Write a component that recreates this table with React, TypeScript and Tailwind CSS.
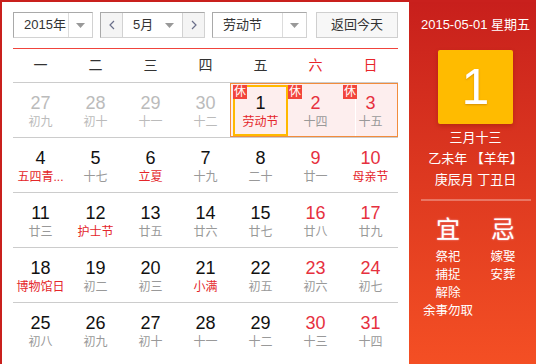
import React from 'react';

type Day = { n: number; sub: string; dim?: boolean; weekend?: boolean; fest?: boolean };

const rows: Day[][] = [
  [
    { n: 27, sub: '初九', dim: true },
    { n: 28, sub: '初十', dim: true },
    { n: 29, sub: '十一', dim: true },
    { n: 30, sub: '十二', dim: true },
    { n: 1, sub: '劳动节', fest: true },
    { n: 2, sub: '十四', weekend: true },
    { n: 3, sub: '十五', weekend: true },
  ],
  [
    { n: 4, sub: '五四青...', fest: true },
    { n: 5, sub: '十七' },
    { n: 6, sub: '立夏', fest: true },
    { n: 7, sub: '十九' },
    { n: 8, sub: '二十' },
    { n: 9, sub: '廿一', weekend: true },
    { n: 10, sub: '母亲节', weekend: true, fest: true },
  ],
  [
    { n: 11, sub: '廿三' },
    { n: 12, sub: '护士节', fest: true },
    { n: 13, sub: '廿五' },
    { n: 14, sub: '廿六' },
    { n: 15, sub: '廿七' },
    { n: 16, sub: '廿八', weekend: true },
    { n: 17, sub: '廿九', weekend: true },
  ],
  [
    { n: 18, sub: '博物馆日', fest: true },
    { n: 19, sub: '初二' },
    { n: 20, sub: '初三' },
    { n: 21, sub: '小满', fest: true },
    { n: 22, sub: '初五' },
    { n: 23, sub: '初六', weekend: true },
    { n: 24, sub: '初七', weekend: true },
  ],
  [
    { n: 25, sub: '初八' },
    { n: 26, sub: '初九' },
    { n: 27, sub: '初十' },
    { n: 28, sub: '十一' },
    { n: 29, sub: '十二' },
    { n: 30, sub: '十三', weekend: true },
    { n: 31, sub: '十四', weekend: true },
  ],
];

const weekdays = ['一', '二', '三', '四', '五', '六', '日'];

function Caret() {
  return (
    <svg width="9" height="5" viewBox="0 0 9 5">
      <path d="M0 0h9L4.5 5z" fill="#999" />
    </svg>
  );
}

function Chevron({ dir }: { dir: 'l' | 'r' }) {
  return (
    <svg width="6" height="10" viewBox="0 0 6 10">
      <path
        d={dir === 'l' ? 'M5 1L1 5l4 4' : 'M1 1l4 4-4 4'}
        fill="none"
        stroke="#6a6f8a"
        strokeWidth="1.2"
      />
    </svg>
  );
}

const box = 'flex h-[26px] border border-[#a9a9a9] border-r-[#d2d2d2] border-b-[#d2d2d2] bg-white';

export default function App() {
  return (
    <div className="w-[536px] h-[364px] overflow-hidden bg-white font-['Liberation_Sans','Noto_Sans_CJK_SC',sans-serif]">
      <div className="flex w-[542px] border-l-2 border-t-2 border-[#c9201d]">
        {/* left: month grid */}
        <div className="w-[407px] px-[11px] pt-[10px]">
          <div className="flex items-center text-[13px] text-[#333]">
            <div className={`${box} w-[80px]`}>
              <div className="flex-1 flex items-center pl-[10px]">2015年</div>
              <div className="w-[24px] flex items-center justify-center border-l border-[#dcdcdc]">
                <Caret />
              </div>
            </div>
            <div className={`${box} w-[105px] ml-[7px]`}>
              <div className="w-[22px] flex items-center justify-center bg-[#f4f4f4] border-r border-[#d2d2d2]">
                <Chevron dir="l" />
              </div>
              <div className="flex-1 flex items-center justify-between pl-[10px] pr-[8px]">
                <span>5月</span>
                <Caret />
              </div>
              <div className="w-[22px] flex items-center justify-center bg-[#f4f4f4] border-l border-[#d2d2d2]">
                <Chevron dir="r" />
              </div>
            </div>
            <div className={`${box} w-[95px] ml-[7px]`}>
              <div className="flex-1 flex items-center pl-[10px]">劳动节</div>
              <div className="w-[24px] flex items-center justify-center border-l border-[#dcdcdc]">
                <Caret />
              </div>
            </div>
            <button className="ml-[9px] h-[26px] w-[82px] border border-[#cfcfcf] bg-[#f7f7f7] text-[#333]">
              返回今天
            </button>
          </div>

          <div className="mt-[10px] h-px bg-[#f0443c]" />

          <div className="grid grid-cols-7 h-[33px] items-center text-[14px]">
            {weekdays.map((w, i) => (
              <div key={w} className={`text-center ${i >= 5 ? 'text-[#e8262a]' : 'text-[#333]'}`}>
                {w}
              </div>
            ))}
          </div>

          {rows.map((row, ri) => (
            <div key={ri} className="relative grid grid-cols-7 h-[55px] border-t border-[#cccccc]">
              {ri === 0 && (
                <>
                  <div className="absolute left-[217px] top-0 w-[168px] h-[54px] border border-[#f28c3c] bg-[#fdeeee]" />
                  <div className="absolute left-[342px] top-[1px] w-px h-[52px] bg-white" />
                  <div className="absolute left-[220px] top-[2px] w-[55px] h-[51px] border-2 border-[#ffb900]" />
                </>
              )}
              {row.map((d, ci) => {
                const numColor = d.dim ? 'text-[#bbbbbb]' : d.weekend ? 'text-[#e6303e]' : 'text-[#111]';
                const subColor = d.dim ? 'text-[#bbbbbb]' : d.fest ? 'text-[#e4262a]' : 'text-[#999]';
                const rest = ri === 0 && ci >= 4;
                return (
                  <div key={ci} className="relative flex flex-col items-center pt-[9px]">
                    {rest && (
                      <span className="absolute left-0 top-[2px] w-[14px] h-[14px] bg-[#f2453b] text-white text-[12px] leading-[14px] text-center">
                        休
                      </span>
                    )}
                    <span className={`text-[18px] leading-[22px] ${numColor}`}>{d.n}</span>
                    <span className={`text-[12px] leading-[16px] whitespace-nowrap ${subColor}`}>{d.sub}</span>
                  </div>
                );
              })}
            </div>
          ))}
        </div>

        {/* right: selected day detail */}
        <div className="w-[133px] h-[362px] bg-gradient-to-b from-[#c81f1c] to-[#f44f24] text-white flex flex-col items-center">
          <div className="mt-[14px] text-[13px] leading-[18px]">2015-05-01 星期五</div>
          <div className="mt-[16px] w-[75px] h-[74px] bg-[#ffbb00] rounded-[2px] shadow-[0_2px_4px_rgba(120,20,0,0.35)] flex items-center justify-center">
            <span className="text-[50px] leading-none text-white [text-shadow:0_1px_2px_rgba(150,80,0,0.4)]">1</span>
          </div>
          <div className="mt-[3px] text-[13px] leading-[21px] text-center">
            <div>三月十三</div>
            <div>乙未年 【羊年】</div>
            <div>庚辰月 丁丑日</div>
          </div>
          <div className="mt-[9px] w-[110px] h-[2px] bg-white/30" />
          <div className="grid grid-cols-2 w-[110px] mt-[15px]">
            <div className="flex flex-col items-center">
              <div className="text-[24px] leading-[28px] [text-shadow:0_0_2px_rgba(255,200,230,0.8)]">宜</div>
              <div className="mt-[4px] text-[12.5px] leading-[18px] text-center whitespace-nowrap">
                <div>祭祀</div>
                <div>捕捉</div>
                <div>解除</div>
                <div>余事勿取</div>
              </div>
            </div>
            <div className="flex flex-col items-center">
              <div className="text-[24px] leading-[28px] [text-shadow:0_0_2px_rgba(255,200,230,0.8)]">忌</div>
              <div className="mt-[4px] text-[12.5px] leading-[18px] text-center">
                <div>嫁娶</div>
                <div>安葬</div>
              </div>
            </div>
          </div>
        </div>
      </div>
    </div>
  );
}
